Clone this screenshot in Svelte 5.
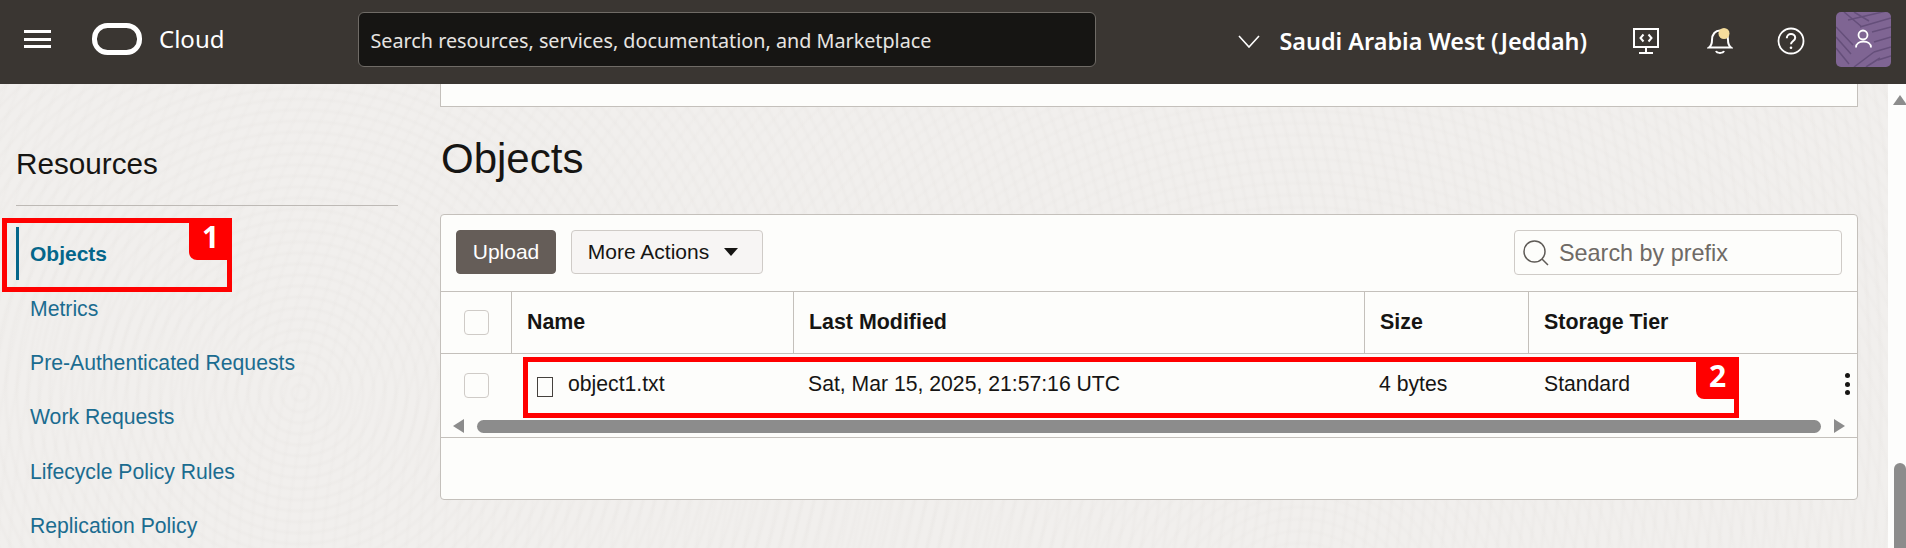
<script>
    const links = ['Objects', 'Metrics', 'Pre-Authenticated Requests', 'Work Requests', 'Lifecycle Policy Rules', 'Replication Policy'];
    const columns = ['Name', 'Last Modified', 'Size', 'Storage Tier'];
</script>

<div class="page">
    <header class="topbar">
        <button class="menu" aria-label="Menu">
            <span></span><span></span><span></span>
        </button>
        <svg class="logo" viewBox="0 0 50 32" aria-hidden="true">
            <rect x="2.500" y="2.500" width="45" height="27" rx="13" fill="none" stroke="#fff" stroke-width="5" />
        </svg>
        <span class="brand">Cloud</span>
        <div class="global-search">Search resources, services, documentation, and Marketplace</div>
        <svg class="chevron" viewBox="0 0 22 13" aria-hidden="true">
            <path d="M1 1l10 11L21 1" fill="none" stroke="#fff" stroke-width="1.600" />
        </svg>
        <span class="region">Saudi Arabia West (Jeddah)</span>
        <div class="tools">
            <svg class="console" viewBox="0 0 26 26" aria-hidden="true">
                <path d="M1 1h24v18H1zM13 19v6M6 25h14" fill="none" stroke="#fff" stroke-width="2" />
                <path d="M10.500 6.500L7.500 10l3 3.500M15.500 6.500l3 3.500-3 3.500" fill="none" stroke="#fff" stroke-width="2" />
            </svg>
            <svg class="bell" viewBox="0 0 26 26" aria-hidden="true">
                <path d="M2 19.500c2-1.500 3-3 3-7.500 0-6 3.500-9.500 8-9.500s8 3.500 8 9.500c0 4.500 1 6 3 7.500z" fill="none" stroke="#fff" stroke-width="2" />
                <path d="M9 23c1 2.500 7 2.500 8 0" fill="none" stroke="#fff" stroke-width="2" />
                <circle cx="17" cy="5.500" r="5.500" fill="#f5dc9c" />
            </svg>
            <svg class="help" viewBox="0 0 28 28" aria-hidden="true">
                <circle cx="14" cy="14" r="12.500" fill="none" stroke="#fff" stroke-width="1.800" />
                <path d="M9.800 11.200c0-2.600 1.900-4.200 4.200-4.200s4.200 1.500 4.200 3.700c0 3.300-4.200 3.300-4.200 6.600" fill="none" stroke="#fff" stroke-width="2" />
                <circle cx="14" cy="20.800" r="1.300" fill="#fff" />
            </svg>
            <div class="avatar">
                <svg viewBox="0 0 55 55" aria-hidden="true">
                    <path d="M0 15L17 33M0 25L15 42M0 36L13 52M8 0L26 15M18 0L33 9M12 8L55 -2M24 15L55 6M36 20L55 15M38 30L55 25M38 40L55 35M42 48L55 44M18 55L38 40M30 55L44 46" fill="none" stroke="#654f7a" stroke-width="1.500" />
                    <circle cx="27" cy="23" r="4.500" fill="#7f6593" stroke="#fff" stroke-width="1.800" />
                    <path d="M20 35.500c0-8 15-8 15 0" fill="#7f6593" stroke="#fff" stroke-width="1.800" />
                </svg>
            </div>
        </div>
    </header>

    <div class="body">
        <aside class="sidebar">
            <h2>Resources</h2>
            <nav>
                {#each links as link, i}
                    <div class="link" class:active={i === 0}>
                        {link}
                        {#if i === 0}
                            <div class="callout one"><span class="badge">1</span></div>
                        {/if}
                    </div>
                {/each}
            </nav>
        </aside>

        <main class="content">
            <div class="card-tail"></div>
            <h1>Objects</h1>
            <section class="card">
                <div class="toolbar">
                    <button class="upload">Upload</button>
                    <button class="more">More Actions <i class="caret"></i></button>
                    <div class="prefix">
                        <svg viewBox="0 0 26 26" aria-hidden="true">
                            <circle cx="11.500" cy="11.500" r="10.500" fill="none" stroke="#5f5b57" stroke-width="1.500" />
                            <path d="M19 19l6 6" stroke="#5f5b57" stroke-width="1.500" />
                        </svg>
                        <span>Search by prefix</span>
                    </div>
                </div>
                <div class="row head">
                    <div class="cell check"><i class="box"></i></div>
                    {#each columns as col}
                        <div class="cell">{col}</div>
                    {/each}
                </div>
                <div class="row item">
                    <div class="cell check"><i class="box"></i></div>
                    <div class="cell name"><i class="file"></i>object1.txt</div>
                    <div class="cell">Sat, Mar 15, 2025, 21:57:16 UTC</div>
                    <div class="cell">4 bytes</div>
                    <div class="cell tier">Standard</div>
                    <div class="kebab"><i></i><i></i><i></i></div>
                    <div class="callout two"><span class="badge">2</span></div>
                </div>
                <div class="hscroll">
                    <i class="arrow left"></i>
                    <div class="thumb"></div>
                    <i class="arrow right"></i>
                </div>
                <div class="foot"></div>
            </section>
        </main>

        <div class="scrollbar">
            <i class="up"></i>
            <div class="bar"></div>
        </div>
    </div>
</div>

<style>
    :global(body) {
        margin: 0;
        font-family: "Liberation Sans", Arial, sans-serif;
    }

    .page {
        width: 1906px;
        height: 548px;
        overflow: hidden;
        display: flex;
        flex-direction: column;
        color: #161513;
    }

    /* top bar */
    .topbar {
        flex: 0 0 84px;
        box-sizing: border-box;
        height: 84px;
        background: #3a3632;
        display: flex;
        align-items: center;
        color: #fff;
        font-family: "Noto Sans", sans-serif;
    }
    .menu {
        all: unset;
        margin: -6px 0 0 24px;
        width: 27px;
        display: flex;
        flex-direction: column;
        gap: 4.500px;
    }
    .menu span {
        height: 3px;
        background: #fff;
    }
    .logo {
        margin: -6px 0 0 41px;
        width: 50px;
        height: 32px;
    }
    .brand {
        margin: -8px 0 0 17px;
        font-size: 24px;
    }
    .global-search {
        margin: -5px 0 0 134px;
        width: 738px;
        height: 55px;
        box-sizing: border-box;
        border: 1px solid #6f6b66;
        border-radius: 6px;
        background: #161513;
        padding: 1px 0 0 11px;
        display: flex;
        align-items: center;
        font-size: 19.750px;
        color: #e6e4e1;
    }
    .chevron {
        margin: -2px 0 0 142px;
        width: 22px;
        height: 13px;
    }
    .region {
        margin: -3px 0 0 19px;
        font-size: 23.400px;
        font-weight: 600;
        white-space: nowrap;
    }
    .tools {
        margin-left: auto;
        padding-right: 15px;
        display: flex;
        align-items: center;
    }
    .tools svg {
        flex: none;
    }
    .console, .bell {
        width: 26px;
        height: 26px;
        margin-top: -2px;
    }
    .bell { margin-left: 48px; }
    .help {
        width: 28px;
        height: 28px;
        margin: -2px 0 0 44px;
    }
    .avatar {
        margin: -5px 0 0 31px;
        width: 55px;
        height: 55px;
        border-radius: 5px;
        background: #7f6593;
        overflow: hidden;
    }
    .avatar svg {
        display: block;
        width: 55px;
        height: 55px;
    }

    /* body with faint swirl background */
    .body {
        flex: 1;
        min-height: 0;
        display: grid;
        grid-template-columns: 440px 1418px 30px 18px;
        background-color: #f1efed;
        background-image:
            repeating-radial-gradient(circle at 300px 309px, rgba(228, 225, 222, 0) 0 5px, rgba(228, 225, 222, 0.22) 8px, rgba(228, 225, 222, 0) 11px),
            repeating-radial-gradient(circle at 1300px 540px, rgba(228, 225, 222, 0) 0 6px, rgba(228, 225, 222, 0.16) 9px, rgba(228, 225, 222, 0) 12px);
    }

    .sidebar {
        padding: 63px 42px 0 16px;
    }
    .sidebar h2 {
        margin: 0;
        font-size: 29.700px;
        font-weight: 400;
        line-height: 33px;
        padding-bottom: 25px;
        border-bottom: 1px solid #bdb9b5;
    }
    nav {
        padding-top: 21px;
    }
    .link {
        position: relative;
        height: 54.400px;
        box-sizing: border-box;
        padding-left: 14px;
        display: flex;
        align-items: center;
        font-size: 21.200px;
        color: #1b6c90;
    }
    .link.active {
        font-weight: 700;
        font-size: 21px;
        color: #04668a;
    }
    .link.active::before {
        content: '';
        position: absolute;
        left: 0;
        top: 0;
        bottom: 1px;
        width: 3px;
        background: #04668a;
    }

    /* red annotations */
    .callout {
        position: absolute;
        box-sizing: border-box;
        border: 5px solid #f00;
    }
    .callout.one {
        left: -14px;
        top: -9px;
        width: 230px;
        height: 74px;
    }
    .callout.two {
        left: 82px;
        top: 3px;
        width: 1216px;
        height: 61px;
    }
    .badge {
        position: absolute;
        top: -5px;
        right: -5px;
        width: 43px;
        height: 42px;
        background: #f00;
        border-radius: 0 0 0 8px;
        color: #fff;
        font: 700 30px/38px "Open Sans", sans-serif;
        text-align: center;
    }

    /* content */
    .card-tail {
        height: 23px;
        box-sizing: border-box;
        background: #fdfdfb;
        border: 1px solid #c4c0bb;
        border-top: 0;
    }
    h1 {
        margin: 0;
        font-size: 42px;
        font-weight: 400;
        line-height: 48px;
        padding: 28px 0 31px 1px;
    }
    .card {
        height: 286px;
        box-sizing: border-box;
        background: #fdfdfb;
        border: 1px solid #c4c0bb;
        border-radius: 4px;
    }
    .toolbar {
        height: 76px;
        box-sizing: border-box;
        padding: 15px 15px 0 15px;
        display: flex;
        align-items: flex-start;
        gap: 15px;
    }
    .toolbar button {
        height: 44px;
        border-radius: 4px;
        font: 21px "Liberation Sans", sans-serif;
        box-sizing: border-box;
    }
    .upload {
        width: 100px;
        background: #655d58;
        border: 1px solid #655d58;
        color: #fff;
    }
    .more {
        width: 192px;
        padding: 0 8px 0 0;
        background: #f7f5f4;
        border: 1px solid #cfcbc7;
        color: #161513;
        display: flex;
        align-items: center;
        justify-content: center;
        gap: 15px;
    }
    .caret {
        width: 0;
        height: 0;
        border: 7.500px solid transparent;
        border-top: 8px solid #161513;
        border-bottom: 0;
    }
    .prefix {
        margin-left: auto;
        width: 328px;
        height: 45px;
        box-sizing: border-box;
        border: 1px solid #cfcbc7;
        border-radius: 4px;
        display: flex;
        align-items: center;
        padding: 1px 0 0 8px;
        gap: 10px;
        font-size: 23.400px;
        color: #6f6a66;
    }
    .prefix svg {
        width: 26px;
        height: 26px;
    }

    .row {
        display: grid;
        grid-template-columns: 71px 282px 571px 164px 1fr;
        box-sizing: border-box;
        position: relative;
        border-top: 1px solid #c4c0bb;
    }
    .cell {
        display: flex;
        align-items: center;
        padding-left: 14px;
        font-size: 21.200px;
    }
    .head {
        height: 62px;
    }
    .head .cell {
        padding-left: 15px;
        font-weight: 700;
        font-size: 21.400px;
    }
    .head .cell:not(:last-child) {
        border-right: 1px solid #c4c0bb;
    }
    .item {
        height: 66px;
    }
    .item .cell {
        padding-bottom: 5px;
    }
    .item .tier {
        padding-left: 15px;
    }
    .cell.check, .head .cell.check {
        padding-left: 23px;
        padding-bottom: 2px;
    }
    .head .cell.check {
        padding-bottom: 0;
    }
    .box {
        width: 25px;
        height: 25px;
        box-sizing: border-box;
        border: 1px solid #cfcbc7;
        border-radius: 4px;
        background: #fdfdfb;
    }
    .item .name {
        padding-left: 25px;
    }
    .file {
        width: 16px;
        height: 20px;
        box-sizing: border-box;
        border: 1.500px solid #45413d;
        margin: 6px 15px 0 0;
    }
    .kebab {
        position: absolute;
        right: 7px;
        top: 19px;
        display: flex;
        flex-direction: column;
        gap: 3.500px;
    }
    .kebab i {
        width: 5px;
        height: 5px;
        border-radius: 50%;
        background: #161513;
    }

    .hscroll {
        height: 18px;
        box-sizing: border-box;
        padding: 0 12px 4px 12px;
        display: flex;
        align-items: center;
        gap: 13px;
    }
    .thumb {
        flex: 1;
        height: 13px;
        border-radius: 7px;
        background: #8c8c8c;
    }
    .arrow {
        width: 0;
        height: 0;
        border-top: 7px solid transparent;
        border-bottom: 7px solid transparent;
    }
    .arrow.left { border-right: 11px solid #8c8c8c; }
    .arrow.right { border-left: 11px solid #8c8c8c; }
    .foot {
        border-top: 1px solid #c4c0bb;
    }

    .scrollbar {
        grid-column: 4;
        background: #fdfdfc;
        position: relative;
    }
    .up {
        display: block;
        width: 0;
        margin: 11px 0 0 5px;
        border-left: 7px solid transparent;
        border-right: 7px solid transparent;
        border-bottom: 10px solid #8c8c8c;
    }
    .bar {
        position: absolute;
        left: 6px;
        right: 0;
        top: 379px;
        bottom: 0;
        border-radius: 6px 6px 0 0;
        background: #8c8c8c;
    }
</style>
